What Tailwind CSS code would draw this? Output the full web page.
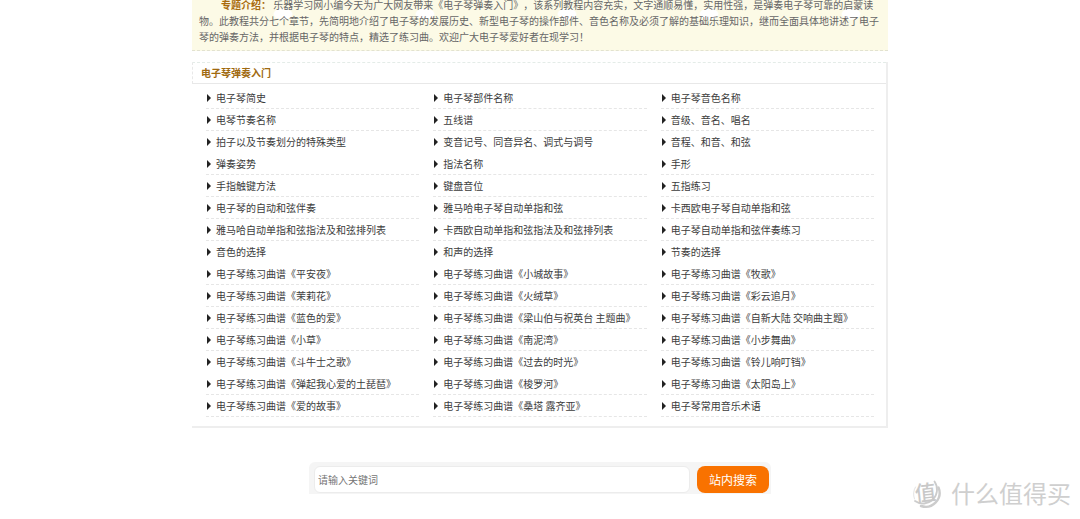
<!DOCTYPE html>
<html lang="zh-CN">
<head>
<meta charset="utf-8">
<meta name="viewport" content="width=device-width, initial-scale=1">
<title>电子琴弹奏入门</title>
<script src="https://cdn.jsdelivr.net/npm/@tailwindcss/browser@4"></script>
</head>
<body class="relative min-h-screen overflow-x-hidden bg-white text-[10px] text-[#3c3c3c] [font-family:'Noto_Sans_CJK_SC',sans-serif] [text-spacing-trim:space-all]">
<main class="mx-auto max-w-[696px]">
  <section class="overflow-hidden border-b border-dashed border-[#e2e2d0] bg-[#fcfae6] [background-image:radial-gradient(ellipse_10px_6px_at_71px_6px,#fff_85%,transparent)] [background-size:142px_60px] [background-position:20px_8px] [background-repeat:repeat-x] px-[7px] pb-[5px]">
    <p class="-mt-[3px] indent-[22px] leading-4 text-[#666]"><strong class="text-[#a86a0c]">专题介绍：</strong> 乐器学习网小编今天为广大网友带来《电子琴弹奏入门》，该系列教程内容充实，文字通顺易懂，实用性强，是弹奏电子琴可靠的启蒙读物。此教程共分七个章节，先简明地介绍了电子琴的发展历史、新型电子琴的操作部件、音色名称及必须了解的基础乐理知识，继而全面具体地讲述了电子琴的弹奏方法，并根据电子琴的特点，精选了练习曲。欢迎广大电子琴爱好者在现学习！</p>
  </section>

  <section class="mt-[11px] border-r-2 border-b-2 border-[#eee]">
    <h2 class="border-t border-b border-l border-[#e8e8e8] border-t-[#e4ece8] [border-top-style:dashed] [border-left-style:dashed] px-2 leading-5 font-bold text-[#a06a10]">电子琴弹奏入门</h2>
    <ul id="lessons" class="grid grid-cols-1 gap-x-[14px] pt-[3px] pr-3 pb-[9px] pl-[14px] sm:grid-cols-3"></ul>
  </section>

  <form class="mx-auto mt-[34px] flex max-w-[462px] gap-[7px] rounded-t-md bg-[#f5f5f5] pt-1 pr-[2px] pb-px pl-[5px]" onsubmit="return false">
    <input type="search" aria-label="请输入关键词" placeholder="请输入关键词" class="h-[27px] min-w-0 flex-1 appearance-none rounded-md border border-[#ececec] bg-white px-[3px] text-[10px] placeholder:text-[#757575]">
    <button type="submit" class="h-[27px] w-[72px] rounded-lg bg-[#f97200] text-[12px] text-white">站内搜索</button>
  </form>
</main>

<div class="absolute right-[9px] bottom-[10px] flex items-center gap-2">
  <svg class="size-8" viewBox="0 0 32 32" fill="none" stroke-linecap="round" aria-hidden="true">
    <path d="M23.500 4.500A14 14 0 0 1 4 24" stroke="#ccc" stroke-width="1.800"/>
    <path d="M27.500 10.500A14 14 0 0 1 10 29" stroke="#ccc" stroke-width="2.400"/>
    <path d="M3.500 22A14 14 0 0 1 4.500 10" stroke="#e4e4e4" stroke-width="1"/>
    <text x="14.500" y="23.500" font-size="21" font-weight="500" text-anchor="middle" fill="#c8c8c8" transform="rotate(-6 15 16)">值</text>
  </svg>
  <span class="text-[24px] leading-8 text-[#cfcfcf]">什么值得买</span>
</div>

<script>
const lessons = [
  '电子琴简史', '电子琴部件名称', '电子琴音色名称',
  '电琴节奏名称', '五线谱', '音级、音名、唱名',
  '拍子以及节奏划分的特殊类型', '变音记号、同音异名、调式与调号', '音程、和音、和弦',
  '弹奏姿势', '指法名称', '手形',
  '手指触键方法', '键盘音位', '五指练习',
  '电子琴的自动和弦伴奏', '雅马哈电子琴自动单指和弦', '卡西欧电子琴自动单指和弦',
  '雅马哈自动单指和弦指法及和弦排列表', '卡西欧自动单指和弦指法及和弦排列表', '电子琴自动单指和弦伴奏练习',
  '音色的选择', '和声的选择', '节奏的选择',
  '电子琴练习曲谱《平安夜》', '电子琴练习曲谱《小城故事》', '电子琴练习曲谱《牧歌》',
  '电子琴练习曲谱《茉莉花》', '电子琴练习曲谱《火绒草》', '电子琴练习曲谱《彩云追月》',
  '电子琴练习曲谱《蓝色的爱》', '电子琴练习曲谱《梁山伯与祝英台 主题曲》', '电子琴练习曲谱《自新大陆 交响曲主题》',
  '电子琴练习曲谱《小草》', '电子琴练习曲谱《南泥湾》', '电子琴练习曲谱《小步舞曲》',
  '电子琴练习曲谱《斗牛士之歌》', '电子琴练习曲谱《过去的时光》', '电子琴练习曲谱《铃儿响叮铛》',
  '电子琴练习曲谱《弹起我心爱的土琵琶》', '电子琴练习曲谱《梭罗河》', '电子琴练习曲谱《太阳岛上》',
  '电子琴练习曲谱《爱的故事》', '电子琴练习曲谱《桑塔 露齐亚》', '电子琴常用音乐术语'
];
document.getElementById('lessons').innerHTML = lessons.map((title, i) => {
  // The third row of every five has no rule below it.
  const rule = Math.floor(i / 3) % 5 === 2 ? 'border-transparent' : 'border-[#e6e6e6]';
  return `<li class="flex items-center gap-[5px] border-b border-dashed ${rule} leading-[21px] whitespace-nowrap">
    <svg class="ml-px h-2 w-1 shrink-0" viewBox="0 0 4 8" fill="#222" aria-hidden="true"><path d="M0 0L4 4L0 8Z"/></svg>
    <a href="#">${title}</a></li>`;
}).join('');
</script>
</body>
</html>
